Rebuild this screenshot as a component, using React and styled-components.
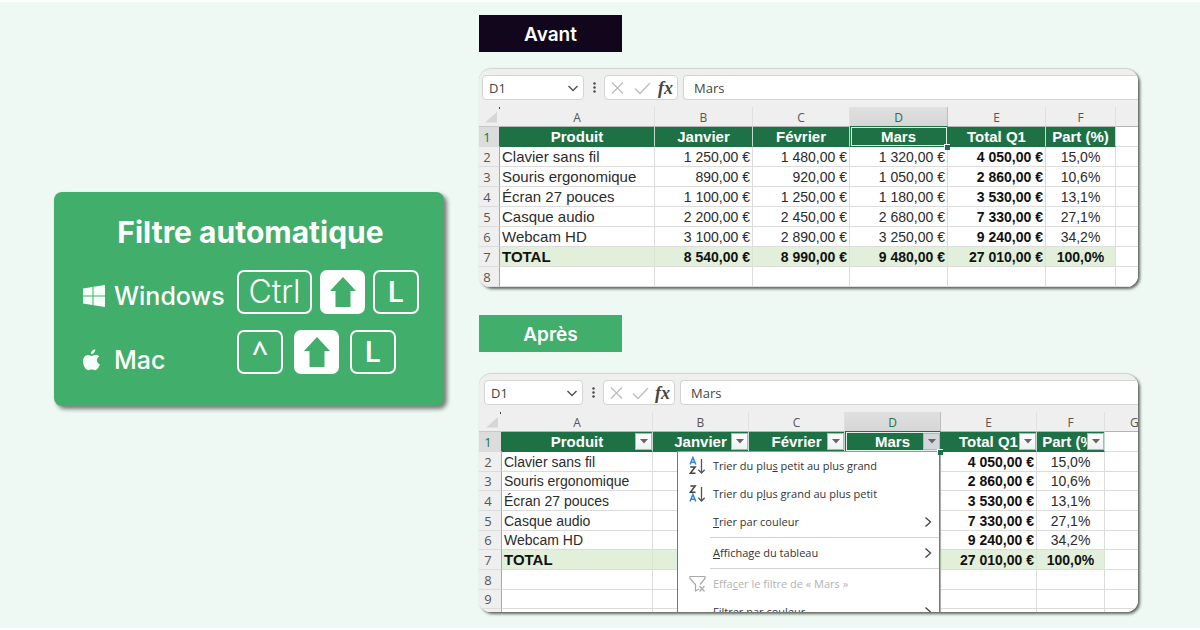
import React from "react";
import styled, { createGlobalStyle, css } from "styled-components";

const GlobalStyle = createGlobalStyle`
  *, *::before, *::after { box-sizing: border-box; }
  body { margin: 0; background: #fdfffe; font-family: "Inter", sans-serif; }
  button, input, select { font: inherit; color: inherit; margin: 0; }
`;

const Page = styled.main`
  margin: 2px 0;
  padding: 13px 62px 16px 54px;
  background: #eef9f3;
  display: grid;
  grid-template-columns: 390fr 659fr;
  column-gap: 35px;
  align-items: start;
`;

/* Shortcut card */

const Card = styled.section`
  margin-top: 177px;
  padding: 22px 25px 27px 28px;
  background: #42ae6b;
  color: #fff;
  border-radius: 8px;
  box-shadow: 3px 3px 4px rgba(0, 0, 0, 0.5);
`;

const CardTitle = styled.h1`
  margin: 0 0 20px;
  font-size: 30px;
  line-height: 36px;
  font-weight: 700;
  text-align: center;
`;

const Shortcut = styled.div`
  display: grid;
  grid-template-columns: 155px 1fr;
  height: 45px;
  & + & { height: 49px; margin-top: 15px; }
`;

const Platform = styled.div`
  display: flex;
  align-items: center;
  align-self: end;
  gap: 8px;
  font-size: 25px;
  line-height: 38px;
  font-weight: 500;
  svg { width: 24px; height: 24px; flex: none; }
`;

const Keys = styled.div`
  display: flex;
  align-items: flex-start;
  gap: ${(p) => p.$gap}px;
`;

const Key = styled.kbd`
  display: flex;
  align-items: center;
  justify-content: center;
  width: ${(p) => (p.$wide ? 75 : 46)}px;
  height: 44px;
  border: 2px solid #fff;
  border-radius: 7px;
  font-family: ${(p) => (p.$symbol ? '"Open Sans"' : '"Inter"')}, sans-serif;
  font-size: ${(p) => (p.$wide ? 32 : 28)}px;
  font-weight: ${(p) => (p.$wide ? 300 : 600)};
  line-height: 40px;
`;

const ShiftKey = styled(Key)`
  width: 45px;
  background: #fff;
  svg { width: 28px; height: 32px; flex: none; }
`;

/* Before / after column */

const Demos = styled.div`
  min-width: 0;
`;

const Tag = styled.h2`
  width: 143px;
  margin: 0;
  padding-top: 2px;
  font-size: 19px;
  line-height: 35px;
  font-weight: 600;
  text-align: center;
  color: #fff;
  background: ${(p) => (p.$after ? "#42ae6b" : "#12061d")};
`;

const Panel = styled.section`
  margin: ${(p) => (p.$after ? "22px 0 0" : "17px 0 28px")};
  padding-top: 6px;
  background: #efefef;
  border-radius: 12px;
  overflow: hidden;
  box-shadow: 2px 2px 3px rgba(0, 0, 0, 0.6), 0 -1px 1px rgba(0, 0, 0, 0.12);
`;

const FormulaBar = styled.div`
  display: flex;
  height: 25px;
  margin-bottom: 7px;
  padding-left: ${(p) => (p.$after ? 5 : 3)}px;
  font-family: "Open Sans", sans-serif;
  font-size: 13px;
  color: #444;
`;

const field = css`
  background: #fff;
  border: 1px solid #d4d4d4;
  border-radius: 4px;
`;

const NameBox = styled.label`
  ${field}
  display: flex;
  align-items: center;
  width: ${(p) => (p.$after ? 99 : 102)}px;
  padding-right: 4px;
  select {
    flex: 1;
    min-width: 0;
    padding: 0 0 0 6px;
    border: 0;
    background: none;
    appearance: none;
    outline: none;
  }
  svg { width: 12px; height: 12px; flex: none; }
`;

const Dots = styled.svg`
  width: 20px;
  height: 25px;
`;

const FxBox = styled.div`
  ${field}
  display: flex;
  align-items: center;
  justify-content: space-between;
  width: ${(p) => (p.$after ? 72 : 74)}px;
  padding: 0 4px;
  margin-right: 5px;
`;

const FxButton = styled.button`
  display: flex;
  align-items: center;
  justify-content: center;
  padding: 0;
  border: 0;
  background: none;
  svg { width: 17px; height: 16px; }
`;

const FxGlyph = styled.span`
  font-family: "Liberation Serif", serif;
  font-style: italic;
  font-weight: 700;
  font-size: 18px;
  line-height: 20px;
`;

const FormulaInput = styled.input`
  ${field}
  flex: 1;
  min-width: 0;
  padding: 0 10px;
  border-right: 0;
  border-radius: 4px 0 0 4px;
  outline: none;
`;

/* Sheet */

const Sheet = styled.table`
  width: 100%;
  table-layout: fixed;
  border-collapse: separate;
  border-spacing: 0;
  background: #fff;
  font-family: "Liberation Sans", sans-serif;
  font-size: 14px;
  line-height: 18px;
  color: #2b2b2b;
  th, td { padding: 0; white-space: nowrap; }
  tbody tr { height: 20px; }
  ${(p) => p.$after && css`tbody tr:nth-child(3n) { height: 19px; }`}
`;

const ColHead = styled.th`
  height: 20px;
  && { padding-top: ${(p) => (p.$active ? 2 : 1)}px; }
  line-height: 17px;
  font-family: "Open Sans", sans-serif;
  font-size: 12px;
  font-weight: 400;
  color: ${(p) => (p.$active ? "#217346" : "#555")};
  background: ${(p) => (p.$active ? "linear-gradient(#e0e0e0, #d6d6d6)" : "#efefef")};
  border-right: 1px solid ${(p) => (p.$active ? "#bdbdbd" : "#e0e0e0")};
  border-bottom: 1px solid ${(p) => (p.$active ? "#1e7145" : "#b4b4b4")};
  &:last-child { border-right: 0; }
`;

const CutLetter = styled.span`
  display: block;
  padding-left: 25px;
  overflow: hidden;
  text-align: left;
`;

const Corner = styled.td`
  background: #efefef;
  border-bottom: 1px solid #c8c8c8;
  svg { display: block; width: 100%; height: 19px; }
`;

const RowHead = styled.th`
  font-family: "Open Sans", sans-serif;
  font-size: 13px;
  font-weight: 400;
  && { padding-right: 4px; }
  color: ${(p) => (p.$active ? "#217346" : "#555")};
  background: ${(p) => (p.$active ? "#dcdcdc" : "#efefef")};
  border-right: 1px solid ${(p) => (p.$active ? "#1e7145" : "#a6a6a6")};
  border-bottom: 1px solid #dcdcdc;
  overflow: hidden;
`;

const FieldHead = styled.th`
  position: relative;
  font-size: 15px;
  font-weight: 700;
  color: #fff;
  background: #1e7145;
  border-right: 1px solid ${(p) => (p.$active ? "#1e7145" : "#c4dccf")};
  border-bottom: 1px solid #1e7145;
  ${(p) => p.$active && css`box-shadow: inset 1px 0 #1e7145, inset 2px 0 #dfeee6, inset 0 0 0 1px #dfeee6;`}
`;

const FillHandle = styled.span`
  position: absolute;
  right: -3px;
  bottom: -4px;
  width: 6px;
  height: 6px;
  background: #1e7145;
  border: 1px solid #fff;
  border-right: 0;
  border-bottom: 0;
  z-index: 3;
`;

const Cell = styled.td`
  border-right: 1px solid #dcdcdc;
  border-bottom: 1px solid #dcdcdc;
  text-align: ${(p) => p.$align || "left"};
  font-weight: ${(p) => (p.$bold ? 700 : 400)};
  color: ${(p) => (p.$bold ? "#111" : "inherit")};
  background: ${(p) => (p.$total ? "#e2efda" : "#fff")};
  ${(p) => p.$total && css`border-right-color: #d8e5d0;`}
  && { padding: ${(p) => (p.$align === "center" ? 0 : "0 2px")}; }
  font-size: ${(p) => (p.$large ? 15 : 14)}px;
  &:last-child { border-right: 0; }
`;

const FootSpace = styled.tfoot`
  td { height: 3px; border-right: 1px solid #dcdcdc; }
  td:first-child { background: #efefef; border-right-color: #a6a6a6; }
  td:last-child { border-right: 0; }
`;

const FilterButton = styled.button`
  position: absolute;
  right: 0;
  top: 1px;
  width: 17px;
  height: 17px;
  padding: 0;
  display: flex;
  align-items: center;
  justify-content: center;
  border: 1px solid #b5b5b5;
  background: ${(p) => (p.$open ? "#d3d6dc" : "linear-gradient(#fff, #eef0f4)")};
  svg { width: 8px; height: 5px; flex: none; }
`;

const Menu = styled.div`
  position: absolute;
  top: 100%;
  right: 0;
  z-index: 2;
  width: 263px;
  background: #fff;
  border: 1px solid #777;
  border-top-color: #999;
  box-shadow: 1px 1px 1px rgba(0, 0, 0, 0.2);
`;

const MenuItem = styled.button`
  display: grid;
  grid-template-columns: 35px 1fr 12px;
  align-items: center;
  width: 100%;
  height: 28px;
  padding: 0 4px 0 0;
  border: 0;
  background: none;
  text-align: left;
  font-family: "Open Sans", sans-serif;
  font-size: 11px;
  line-height: 16px;
  font-weight: 400;
  color: #333;
  &:disabled { color: #b3b3b3; }
  u { text-underline-offset: 1px; }
`;

const MenuIcon = styled.svg`
  width: 18px;
  height: 20px;
  margin-left: 11px;
`;

const Chevron = styled.svg`
  grid-column: 3;
  width: 10px;
  height: 12px;
`;

const Divider = styled.hr`
  height: 1px;
  margin: 1px 0 1px 32px;
  border: 0;
  background: #d2d2d2;
`;

const ShiftArrow = () => (
  <ShiftKey aria-label="Maj">
    <svg viewBox="0 0 28 32" aria-hidden="true">
      <path d="M14 1 27 15H21.500V31H6.500V15H1Z" fill="#42ae6b" />
    </svg>
  </ShiftKey>
);

const SortIcon = ({ reverse }) => (
  <MenuIcon viewBox="0 0 18 20" fill="none" strokeWidth="1.500" aria-hidden="true">
    <g transform={reverse ? "translate(0 9)" : undefined} stroke="#2b88d8">
      <path d="M1 8.500 3.900 1.500 6.800 8.500M2 6.200H5.800" />
    </g>
    <g transform={reverse ? "translate(0 -9)" : undefined} stroke="#444">
      <path d="M1.300 11H6.200L1.300 17.300H6.500" />
    </g>
    <path d="M12.500 3V17M9.300 13.700 12.500 17 15.700 13.700" stroke="#555" strokeWidth="1.300" />
  </MenuIcon>
);

const MenuChevron = () => (
  <Chevron viewBox="0 0 10 12" fill="none" stroke="#444" strokeWidth="1.300" aria-hidden="true">
    <path d="M2.500 1.500 7.500 6 2.500 10.500" />
  </Chevron>
);

const FilterMenu = () => (
  <Menu>
    <MenuItem>
      <SortIcon />
      <span>Trier du plu<u>s</u> petit au plus grand</span>
    </MenuItem>
    <MenuItem>
      <SortIcon reverse />
      <span>Trier du p<u>l</u>us grand au plus petit</span>
    </MenuItem>
    <MenuItem>
      <span />
      <span><u>T</u>rier par couleur</span>
      <MenuChevron />
    </MenuItem>
    <Divider />
    <MenuItem>
      <span />
      <span><u>A</u>ffichage du tableau</span>
      <MenuChevron />
    </MenuItem>
    <Divider />
    <MenuItem disabled>
      <MenuIcon viewBox="0 0 18 20" fill="none" stroke="#a8a8a8" strokeWidth="1.200" aria-hidden="true">
        <path d="M11 10.500 16 4.500V2.500H1V4.500L6.500 10.500V17L10 15" />
        <path d="M10.500 12 15.500 17.500M15.500 12 10.500 17.500" />
      </MenuIcon>
      <span>Effa<u>c</u>er le filtre de « Mars »</span>
    </MenuItem>
    <MenuItem>
      <span />
      <span>F<u>i</u>ltrer par couleur</span>
      <MenuChevron />
    </MenuItem>
  </Menu>
);

const fields = ["Produit", "Janvier", "Février", "Mars", "Total Q1", "Part (%)"];
const records = [
  ["Clavier sans fil", "1 250,00 €", "1 480,00 €", "1 320,00 €", "4 050,00 €", "15,0%"],
  ["Souris ergonomique", "890,00 €", "920,00 €", "1 050,00 €", "2 860,00 €", "10,6%"],
  ["Écran 27 pouces", "1 100,00 €", "1 250,00 €", "1 180,00 €", "3 530,00 €", "13,1%"],
  ["Casque audio", "2 200,00 €", "2 450,00 €", "2 680,00 €", "7 330,00 €", "27,1%"],
  ["Webcam HD", "3 100,00 €", "2 890,00 €", "3 250,00 €", "9 240,00 €", "34,2%"],
  ["TOTAL", "8 540,00 €", "8 990,00 €", "9 480,00 €", "27 010,00 €", "100,0%"],
];
const columnWidths = {
  before: [21, 155, 98, 97, 98, 98, 70],
  after: [23, 151, 96, 96, 96, 96, 68],
};

const Workbook = ({ after }) => {
  const widths = after ? columnWidths.after : columnWidths.before;
  const emptyRows = after ? [8, 9] : [8];
  return (
    <Panel $after={after}>
      <FormulaBar $after={after}>
        <NameBox $after={after}>
          <select aria-label="Zone Nom" defaultValue="D1">
            <option>D1</option>
          </select>
          <svg viewBox="0 0 12 12" fill="none" stroke="#555" strokeWidth="1.500" aria-hidden="true">
            <path d="M1.500 4 6 8.500 10.500 4" />
          </svg>
        </NameBox>
        <Dots viewBox="0 0 20 25" fill="#444" aria-hidden="true">
          <circle cx="10.500" cy="8.500" r="1.200" />
          <circle cx="10.500" cy="12.500" r="1.200" />
          <circle cx="10.500" cy="16.500" r="1.200" />
        </Dots>
        <FxBox $after={after}>
          <FxButton aria-label="Annuler">
            <svg viewBox="0 0 17 16" fill="none" stroke="#bdbdbd" strokeWidth="1.300">
              <path d="M3 2.500 14 13.500M14 2.500 3 13.500" />
            </svg>
          </FxButton>
          <FxButton aria-label="Entrer">
            <svg viewBox="0 0 17 16" fill="none" stroke="#bdbdbd" strokeWidth="1.300">
              <path d="M1 8.500 6 13.500 16 3" />
            </svg>
          </FxButton>
          <FxButton aria-label="Insérer une fonction">
            <FxGlyph>fx</FxGlyph>
          </FxButton>
        </FxBox>
        <FormulaInput aria-label="Barre de formule" defaultValue="Mars" />
      </FormulaBar>
      <Sheet $after={after}>
        <colgroup>
          {widths.map((w, i) => <col key={i} width={w} />)}
          <col />
        </colgroup>
        <thead>
          <tr>
            <Corner>
              <svg viewBox="0 0 21 19" aria-hidden="true">
                <path d="M18 5V15.500H6Z" fill="#d6d6d6" />
                <path d="M20 0h1v2h-1z" fill="#444" />
              </svg>
            </Corner>
            {["A", "B", "C", "D", "E", "F"].map((c) => (
              <ColHead key={c} scope="col" $active={c === "D"}>{c}</ColHead>
            ))}
            <ColHead>{after && <CutLetter>G</CutLetter>}</ColHead>
          </tr>
        </thead>
        <tbody>
          <tr>
            <RowHead scope="row" $active>1</RowHead>
            {fields.map((name) => (
              <FieldHead key={name} scope="col" $active={name === "Mars"}>
                {name}
                {after && (
                  <FilterButton $open={name === "Mars"} aria-label={`Filtrer ${name}`}>
                    <svg viewBox="0 0 8 5" aria-hidden="true"><path d="M0 0H8L4 4.500Z" fill="#666" /></svg>
                  </FilterButton>
                )}
                {name === "Mars" && <FillHandle />}
                {after && name === "Mars" && <FilterMenu />}
              </FieldHead>
            ))}
            <Cell />
          </tr>
          {records.map((record, r) => {
            const total = record[0] === "TOTAL";
            return (
              <tr key={record[0]}>
                <RowHead scope="row">{r + 2}</RowHead>
                {record.map((value, c) => (
                  <Cell
                    key={c}
                    $total={total}
                    $bold={total || c === 4}
                    $align={c === 0 ? "left" : c === 5 ? "center" : "right"}
                    $large={c === 0 && (!after || total)}
                  >
                    {value}
                  </Cell>
                ))}
                <Cell />
              </tr>
            );
          })}
          {emptyRows.map((n) => (
            <tr key={n}>
              <RowHead scope="row">{n}</RowHead>
              {[0, 1, 2, 3, 4, 5, 6].map((c) => <Cell key={c} />)}
            </tr>
          ))}
        </tbody>
        {after && (
          <FootSpace>
            <tr>{[0, 1, 2, 3, 4, 5, 6, 7].map((c) => <td key={c} />)}</tr>
          </FootSpace>
        )}
      </Sheet>
    </Panel>
  );
};

export default function App() {
  return (
    <>
      <GlobalStyle />
      <Page>
        <Card>
          <CardTitle>Filtre automatique</CardTitle>
          <Shortcut>
            <Platform>
              <svg viewBox="0 0 24 24" fill="#f6fff8" aria-hidden="true">
                <path d="M1 4.500 10.500 3V11.500H1ZM11.500 2.800 23 1V11.500H11.500ZM1 12.500H10.500V21L1 19.500ZM11.500 12.500H23V23L11.500 21.200Z" />
              </svg>
              Windows
            </Platform>
            <Keys $gap={8}>
              <Key $wide>Ctrl</Key>
              <ShiftArrow />
              <Key>L</Key>
            </Keys>
          </Shortcut>
          <Shortcut>
            <Platform>
              <svg viewBox="0 0 24 24" fill="#f6fff8" aria-hidden="true">
                <path d="M13.300 1.200C13.500 3.700 11.500 6 9 6 8.800 3.700 10.800 1.500 13.300 1.200ZM17.300 8.400C15.600 9.400 14.900 10.700 14.900 12.300 14.900 14.200 16 15.700 17.900 16.400 17.300 18.300 15.600 21.500 13.800 22.100 12.200 22.600 11.300 21.500 9.700 21.500 8.100 21.500 7 22.600 5.600 22.100 3 21.200 1 17 1 13.300 1 9.500 3.300 7.100 5.900 7 7.500 6.900 8.600 8 9.700 8 10.800 8 12.100 6.800 14 6.800 15.300 6.900 16.500 7.400 17.300 8.400Z" />
              </svg>
              Mac
            </Platform>
            <Keys $gap={11}>
              <Key $symbol>^</Key>
              <ShiftArrow />
              <Key>L</Key>
            </Keys>
          </Shortcut>
        </Card>
        <Demos>
          <Tag>Avant</Tag>
          <Workbook />
          <Tag $after>Après</Tag>
          <Workbook after />
        </Demos>
      </Page>
    </>
  );
}
